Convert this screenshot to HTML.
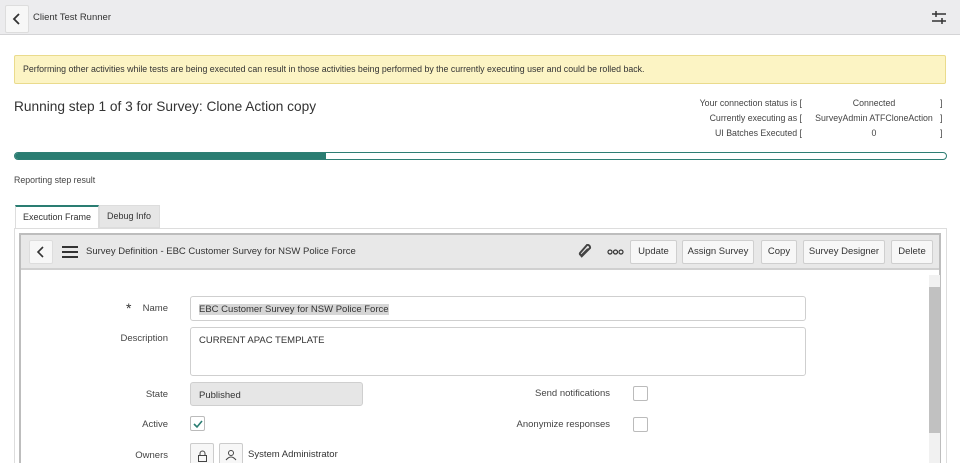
<!DOCTYPE html>
<html style="overflow:hidden;height:463px"><head><meta charset="utf-8"><style>
*{box-sizing:border-box;margin:0;padding:0}
body{width:960px;height:463px;overflow:hidden;background:#fff;font-family:"Liberation Sans",sans-serif;color:#333;position:relative}
.a{position:absolute;white-space:nowrap}
.btn{position:absolute;top:240px;height:24px;border:1px solid #cfcfcf;background:#f7f7f7;border-radius:2px;font-size:9.5px;line-height:22px;text-align:center;color:#333}
.lbl{position:absolute;font-size:9.5px;color:#444;text-align:right;width:120px;left:48px}
.inp{position:absolute;border:1px solid #cfcfcf;border-radius:3px;background:#fff;font-size:9.5px;padding:7px 8px;color:#333}
.cb{position:absolute;width:15px;height:15px;border:1px solid #bbb;border-radius:2px;background:#fff}
</style></head><body>
<div class="a" style="left:0;top:0;width:960px;height:35px;background:#ececee;border-bottom:1px solid #d4d4d6"></div>
<div class="a" style="left:5px;top:5px;width:24px;height:28px;background:#f7f7f7;border:1px solid #ddd;border-radius:2px"></div>
<svg class="a" style="left:11px;top:12px" width="12" height="14"><path d="M8 2 L3 7 L8 12" stroke="#333" stroke-width="1.8" fill="none"/></svg>
<div class="a" style="left:33px;top:12px;font-size:9.5px;color:#333">Client Test Runner</div>
<svg class="a" style="left:930px;top:9px" width="18" height="18"><g stroke="#333" stroke-width="1.5"><line x1="2" y1="5" x2="16" y2="5"/><line x1="2" y1="12" x2="16" y2="12"/><line x1="6" y1="2" x2="6" y2="8"/><line x1="12" y1="9" x2="12" y2="15"/></g></svg>
<div class="a" style="left:14px;top:55px;width:932px;height:29px;background:#fcf4c4;border:1px solid #eadb8c;border-radius:2px"></div>
<div class="a" style="left:23px;top:64px;font-size:8.8px;color:#333">Performing other activities while tests are being executed can result in those activities being performed by the currently executing user and could be rolled back.</div>
<div class="a" style="left:14px;top:99px;font-size:13.7px;color:#333">Running step 1 of 3 for Survey: Clone Action copy</div>
<div class="a" style="left:560px;top:96px;width:242px;text-align:right;font-size:8.8px;line-height:15px;color:#444">Your connection status is [<br>Currently executing as [<br>UI Batches Executed [</div>
<div class="a" style="left:808px;top:96px;width:132px;text-align:center;font-size:8.8px;line-height:15px;color:#444">Connected<br>SurveyAdmin ATFCloneAction<br>0</div>
<div class="a" style="left:940px;top:96px;font-size:8.8px;line-height:15px;color:#444">]<br>]<br>]</div>
<div class="a" style="left:14px;top:152px;width:933px;height:8px;border:1px solid #2e7e74;border-radius:5px;overflow:hidden"><div style="width:311px;height:100%;background:#2a7d72"></div></div>
<div class="a" style="left:14px;top:175px;font-size:8.8px;color:#444">Reporting step result</div>
<div class="a" style="left:15px;top:205px;width:84px;height:24px;background:#fff;border:1px solid #ddd;border-top:2px solid #2a7d72;border-bottom:none;font-size:9px;line-height:21px;padding-left:7px">Execution Frame</div>
<div class="a" style="left:99px;top:205px;width:61px;height:23px;background:#e6e6e6;border:1px solid #ddd;font-size:9px;line-height:21px;padding-left:7px">Debug Info</div>
<div class="a" style="left:14px;top:228px;width:933px;height:240px;border:1px solid #ddd"></div>
<div class="a" style="left:19px;top:233px;width:922px;height:240px;border:2px solid #bdbdbd"></div>
<div class="a" style="left:21px;top:235px;width:918px;height:35px;background:#e8e8e8;border-bottom:2px solid #d0d0d0"></div>
<div class="a" style="left:29px;top:240px;width:24px;height:24px;background:#f7f7f7;border:1px solid #ddd;border-radius:2px"></div>
<svg class="a" style="left:36px;top:246px" width="10" height="12"><path d="M7 1 L2 6 L7 11" stroke="#333" stroke-width="1.6" fill="none"/></svg>
<svg class="a" style="left:62px;top:246px" width="16" height="12"><g stroke="#333" stroke-width="2"><line x1="0" y1="1" x2="16" y2="1"/><line x1="0" y1="6" x2="16" y2="6"/><line x1="0" y1="11" x2="16" y2="11"/></g></svg>
<div class="a" style="left:86px;top:246px;font-size:9.5px;color:#333">Survey Definition - EBC Customer Survey for NSW Police Force</div>
<svg class="a" style="left:578px;top:244px" width="16" height="16"><path d="M3 13 L12 4 A2.5 2.5 0 0 0 9 1 L2 9 A1.5 1.5 0 0 0 4 11 L10 5" stroke="#444" stroke-width="2" fill="none"/></svg>
<svg class="a" style="left:607px;top:249px" width="17" height="6"><g stroke="#333" stroke-width="1.2" fill="none"><circle cx="3" cy="3" r="2"/><circle cx="8.5" cy="3" r="2"/><circle cx="14" cy="3" r="2"/></g></svg>
<div class="btn" style="left:630px;width:47px">Update</div>
<div class="btn" style="left:682px;width:72px">Assign Survey</div>
<div class="btn" style="left:761px;width:36px">Copy</div>
<div class="btn" style="left:803px;width:82px">Survey Designer</div>
<div class="btn" style="left:891px;width:42px">Delete</div>
<div class="a" style="left:929px;top:275px;width:11px;height:190px;background:#f1f1f1"></div>
<div class="a" style="left:929px;top:287px;width:11px;height:146px;background:#c1c1c1"></div>
<div class="a" style="left:126px;top:300px;font-size:14px;color:#333">*</div>
<div class="lbl" style="top:303px">Name</div>
<div class="inp" style="left:190px;top:296px;width:616px;height:25px"><span style="background:#d6d6d6">EBC Customer Survey for NSW Police Force</span></div>
<div class="lbl" style="top:333px">Description</div>
<div class="inp" style="left:190px;top:327px;width:616px;height:49px">CURRENT APAC TEMPLATE</div>
<div class="lbl" style="top:389px">State</div>
<div class="inp" style="left:190px;top:382px;width:173px;height:24px;background:#e6e6e6">Published</div>
<div class="lbl" style="top:419px">Active</div>
<div class="cb" style="left:190px;top:416px"></div>
<svg class="a" style="left:192px;top:418px" width="12" height="12"><path d="M2 6 L5 9 L10 3" stroke="#2a7d72" stroke-width="1.6" fill="none"/></svg>
<div class="lbl" style="top:450px">Owners</div>
<div class="a" style="left:190px;top:443px;width:24px;height:25px;border:1px solid #ccc;border-radius:2px;background:#f7f7f7"></div>
<div class="a" style="left:219px;top:443px;width:24px;height:25px;border:1px solid #ccc;border-radius:2px;background:#f7f7f7"></div>
<svg class="a" style="left:197px;top:450px" width="11" height="13"><rect x="1.5" y="5.5" width="8" height="6" stroke="#444" fill="none"/><path d="M3 5.5 V3.5 A2.5 2.5 0 0 1 8 3.5 V5.5" stroke="#444" fill="none"/></svg>
<svg class="a" style="left:225px;top:449px" width="13" height="12"><circle cx="6" cy="4" r="2.5" stroke="#444" fill="none"/><path d="M1 11 Q6 5 11 11" stroke="#444" fill="none"/></svg>
<div class="a" style="left:248px;top:449px;font-size:9.5px;color:#333">System Administrator</div>
<div class="a" style="left:480px;top:388px;width:130px;text-align:right;font-size:9.5px;color:#444">Send notifications</div>
<div class="cb" style="left:633px;top:386px"></div>
<div class="a" style="left:480px;top:419px;width:130px;text-align:right;font-size:9.5px;color:#444">Anonymize responses</div>
<div class="cb" style="left:633px;top:417px"></div>
</body></html>
